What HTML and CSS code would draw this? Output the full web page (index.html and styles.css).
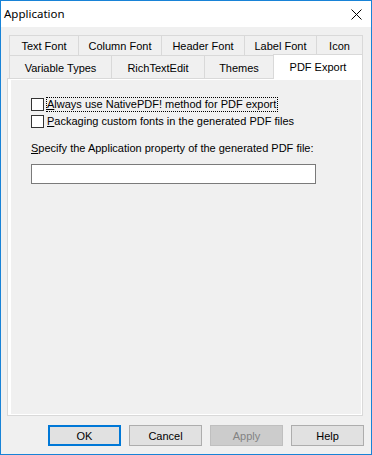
FILE: index.html
```html
<!DOCTYPE html>
<html lang="en">

<head>
    <meta charset="UTF-8">
    <meta name="viewport" content="width=device-width, initial-scale=1.0">
    <title>Application</title>
    <link rel="stylesheet" href="styles.css">
</head>

<body>
    <div class="window">
        <div class="titlebar">
            <span class="title">Application</span>
            <svg class="close" width="11" height="11" viewBox="0 0 11 11">
                <path d="M0.5 0.5 L10.5 10.5 M10.5 0.5 L0.5 10.5" stroke="#000" stroke-width="1" fill="none" />
            </svg>
        </div>

        <div class="content">
            <!-- Tabs -->
            <div class="tab-row back">
                <div class="tab w70">Text Font</div>
                <div class="tab w84">Column Font</div>
                <div class="tab w84">Header Font</div>
                <div class="tab w73">Label Font</div>
                <div class="tab w47">Icon</div>
            </div>
            <div class="tab-row front">
                <div class="tab w103">Variable Types</div>
                <div class="tab w94">RichTextEdit</div>
                <div class="tab w70">Themes</div>
                <div class="tab active w90">PDF Export</div>
            </div>

            <div class="panel">
                <div class="page">
                    <div class="check-row">
                        <span class="checkbox"></span>
                        <span class="check-label focused"><u>A</u>lways use NativePDF! method for PDF export</span>
                    </div>
                    <div class="check-row">
                        <span class="checkbox"></span>
                        <span class="check-label"><u>P</u>ackaging custom fonts in the generated PDF files</span>
                    </div>
                    <div class="field-label"><u>S</u>pecify the Application property of the generated PDF file:</div>
                    <div class="text-input"></div>
                </div>
            </div>

            <div class="buttons">
                <div class="btn default">OK</div>
                <div class="btn">Cancel</div>
                <div class="btn disabled">Apply</div>
                <div class="btn">Help</div>
            </div>
        </div>
    </div>
</body>

</html>
```

FILE: styles.css
```css
body {
    margin: 0;
    padding: 0;
    font-family: 'Liberation Sans', Arial, sans-serif;
    font-size: 11px;
    color: #000;
}

.window {
    width: 372px;
    height: 455px;
    box-sizing: border-box;
    border: 1px solid #1883d7;
    background-color: #f0f0f0;
    display: flex;
    flex-direction: column;
}

.titlebar {
    height: 26px;
    background-color: #fff;
    display: flex;
    justify-content: space-between;
    align-items: flex-start;
    padding: 0 9px 0 3px;
}

.title {
    font-family: 'Noto Sans', 'Open Sans', sans-serif;
    font-size: 11.5px;
    line-height: 26px;
}

.close {
    margin-top: 8px;
}

.content {
    padding: 8px 8px 8px 6px;
    display: flex;
    flex-direction: column;
}

/* Tabs */
.tab-row {
    display: flex;
    margin-left: 2px;
}

.tab {
    box-sizing: border-box;
    border: 1px solid #d9d9d9;
    margin-right: -1px;
    background-color: #f0f0f0;
    display: flex;
    justify-content: center;
    align-items: center;
}

.back .tab {
    height: 20px;
    border-bottom: none;
    padding-top: 1px;
}

.front .tab {
    height: 23px;
    border-bottom: none;
    padding-top: 1px;
}

.front .tab.active {
    height: 25px;
    margin-top: -1px;
    margin-bottom: -1px;
    background-color: #fff;
    position: relative;
    z-index: 1;
    padding-bottom: 2px;
}

.w47 { width: 47px; }
.w70 { width: 70px; }
.w73 { width: 73px; }
.w84 { width: 84px; }
.w90 { width: 90px; }
.w94 { width: 94px; }
.w103 { width: 103px; }

/* Panel */
.panel {
    width: 356px;
    height: 338px;
    box-sizing: border-box;
    border: 1px solid #d9d9d9;
    background-color: #fff;
    padding: 1px 1px 1px 3px;
}

.page {
    height: 100%;
    background-color: #f0f0f0;
    padding: 16px 0 0 20px;
    box-sizing: border-box;
}

.check-row {
    height: 17px;
    display: flex;
    align-items: center;
}

.checkbox {
    width: 13px;
    height: 13px;
    box-sizing: border-box;
    border: 1px solid #333;
    background-color: #fff;
}

.check-label {
    margin-left: 2px;
    border: 1px dotted transparent;
    line-height: 13px;
    padding-right: 1px;
}

.check-label.focused {
    border-color: #000;
}

.field-label {
    margin-top: 10px;
    line-height: 17px;
}

.text-input {
    margin-top: 7px;
    width: 285px;
    height: 20px;
    box-sizing: border-box;
    border: 1px solid #7a7a7a;
    background-color: #fff;
}

/* Buttons */
.buttons {
    margin-top: 9px;
    margin-right: -1px;
    display: flex;
    justify-content: flex-end;
    gap: 8px;
}

.btn {
    width: 73px;
    height: 21px;
    box-sizing: border-box;
    border: 1px solid #adadad;
    background-color: #e1e1e1;
    display: flex;
    justify-content: center;
    align-items: center;
}

.btn.default {
    border: 2px solid #0078d7;
}

.btn.disabled {
    background-color: #cccccc;
    border-color: #bfbfbf;
    color: #838383;
}
```
